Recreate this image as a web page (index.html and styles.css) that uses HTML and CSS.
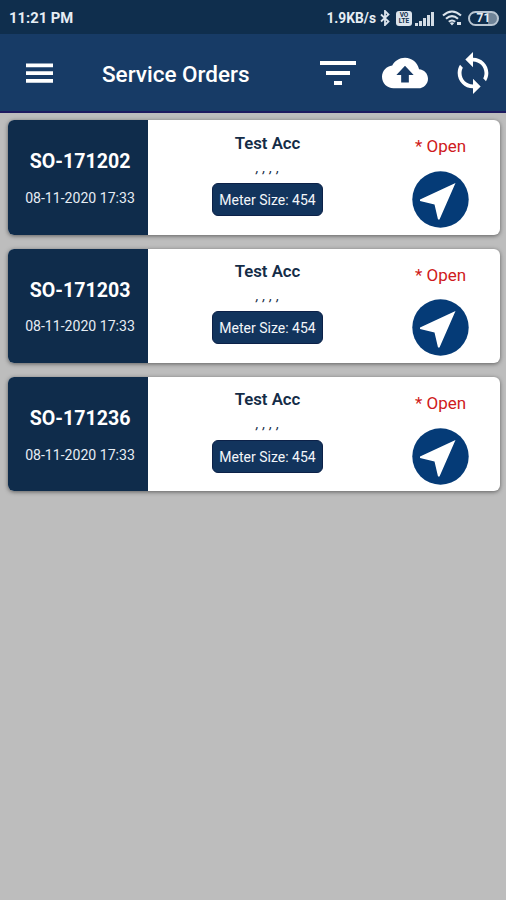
FILE: index.html
```html
<!DOCTYPE html>
<html lang="en">
<head>
<meta charset="utf-8">
<title>Service Orders</title>
<link rel="stylesheet" href="styles.css">
</head>
<body>
<div class="status">
  <span class="time">11:21 PM</span>
  <span class="speed">1.9KB/s</span>
  <svg class="bt" width="10" height="16" viewBox="0 0 10 16"><path d="M1 4.5 8.5 11.5 5 15V1l3.500 3.500L1 11.500" fill="none" stroke="#dce4ec" stroke-width="1.800"/></svg>
  <span class="volte"><span>VO</span><span>LTE</span></span>
  <svg class="signal" width="20" height="15" viewBox="0 0 20 15" fill="#d3dce5"><path d="M0 12h3v3H0zM4 10h3v5H4zM8 7h3v8H8zM12 4h3v11h-3zM16 1h3v14h-3z"/></svg>
  <svg class="wifi" width="20" height="16" viewBox="0 0 20 16"><g fill="none" stroke="#dce4ec" stroke-width="2.100"><path d="M1 5.500q9-8 18 0M4 8.800q6-5.400 12 0M6.800 11.800q3.200-2.600 6.400 0"/></g><path d="m7.800 13 2.200 2.500 2.200-2.500q-2.200-1.500-4.400 0zM15 12h4v3h-4z" fill="#dce4ec"/></svg>
  <span class="battery">71</span>
</div>
<header class="bar">
  <svg class="menu" width="27" height="22" viewBox="0 0 27 22" fill="#fff"><path d="M0 1.500h27v3.800H0zM0 9.200h27v3.800H0zM0 16.900h27v3.800H0z"/></svg>
  <h1>Service Orders</h1>
  <svg class="filter" width="48" height="48" viewBox="0 0 24 24" fill="#fff"><path d="M10 18h4v-2h-4v2zM3 6v2h18V6H3zm3 7h12v-2H6v2z"/></svg>
  <svg class="cloud" width="46" height="46" viewBox="0 0 24 24" fill="#fff"><path d="M19.350 10.040C18.670 6.590 15.640 4 12 4 9.110 4 6.600 5.640 5.350 8.040 2.340 8.360 0 10.910 0 14c0 3.310 2.690 6 6 6h13c2.760 0 5-2.240 5-5 0-2.640-2.050-4.780-4.650-4.960zM14 13v4h-4v-4H7.500l4.500-4.800 4.500 4.800z"/></svg>
  <svg class="sync" width="46" height="46" viewBox="0 0 24 24" fill="#fff"><path d="M12 4V1L8 5l4 4V6c3.310 0 6 2.690 6 6 0 1.010-.25 1.970-.7 2.800l1.460 1.460C19.540 15.030 20 13.570 20 12c0-4.420-3.580-8-8-8zm0 14c-3.310 0-6-2.690-6-6 0-1.010.25-1.970.7-2.800L5.240 7.740C4.460 8.970 4 10.430 4 12c0 4.420 3.580 8 8 8v3l4-4-4-4v3z"/></svg>
</header>
<main class="orders">
  <article class="card">
    <div class="order"><div class="number">SO-171202</div><div class="date">08-11-2020 17:33</div></div>
    <div class="account"><div class="name">Test Acc</div><div class="address">, , , ,</div><div class="meter">Meter Size: 454</div></div>
    <div class="state"><div class="open">* Open</div><svg width="57" height="57" viewBox="0 0 57 57"><circle cx="28.500" cy="28.500" r="28.200" fill="#053b77"/><path d="M43.500 12 8 28.500v1.500l14.500 3.500 3.500 15h1.500z" fill="#fff"/></svg></div>
  </article>
  <article class="card">
    <div class="order"><div class="number">SO-171203</div><div class="date">08-11-2020 17:33</div></div>
    <div class="account"><div class="name">Test Acc</div><div class="address">, , , ,</div><div class="meter">Meter Size: 454</div></div>
    <div class="state"><div class="open">* Open</div><svg width="57" height="57" viewBox="0 0 57 57"><circle cx="28.500" cy="28.500" r="28.200" fill="#053b77"/><path d="M43.500 12 8 28.500v1.500l14.500 3.500 3.500 15h1.500z" fill="#fff"/></svg></div>
  </article>
  <article class="card">
    <div class="order"><div class="number">SO-171236</div><div class="date">08-11-2020 17:33</div></div>
    <div class="account"><div class="name">Test Acc</div><div class="address">, , , ,</div><div class="meter">Meter Size: 454</div></div>
    <div class="state"><div class="open">* Open</div><svg width="57" height="57" viewBox="0 0 57 57"><circle cx="28.500" cy="28.500" r="28.200" fill="#053b77"/><path d="M43.500 12 8 28.500v1.500l14.500 3.500 3.500 15h1.500z" fill="#fff"/></svg></div>
  </article>
</main>
</body>
</html>
```
FILE: styles.css
```css
* { box-sizing: border-box; }
body {
  margin: 0;
  height: 900px;
  overflow: hidden;
  background: #bdbdbd;
  font-family: Roboto, sans-serif;
  white-space: nowrap;
}
svg { display: block; flex: none; }
.status {
  height: 34px;
  display: flex;
  align-items: center;
  padding: 2px 7px 0 9px;
  background: #0f2e4d;
  color: #e6edf4;
}
.time { font-size: 14.800px; font-weight: 700; }
.speed { margin-left: auto; font-size: 13.800px; font-weight: 700; }
.bt { margin-left: 4px; }
.volte {
  width: 16px;
  height: 15px;
  margin-left: 6px;
  padding-top: 1px;
  border-radius: 3px;
  background: #dce4ec;
  color: #0f2e4d;
  display: flex;
  flex-direction: column;
  align-items: center;
  font-size: 6.500px;
  line-height: 6.500px;
  font-weight: 700;
}
.signal { margin-left: 3px; }
.wifi { margin-left: 7px; }
.battery {
  width: 31px;
  height: 15px;
  margin-left: 6px;
  border: 2px solid #b9c6d2;
  border-radius: 8px;
  background: linear-gradient(90deg, #0f2e4d 68%, #6f8498 68%);
  text-align: center;
  font-size: 12px;
  line-height: 11px;
  font-weight: 700;
}
.bar {
  height: 79px;
  display: flex;
  align-items: center;
  background: #173b66;
  border-bottom: 2px solid #1d1a60;
  padding: 0 10px 0 26px;
}
.bar h1 {
  margin: 3px auto 0 49px;
  color: #fff;
  font-size: 22.500px;
  line-height: 28px;
  font-weight: 500;
}
.filter { margin-right: 20px; }
.cloud { margin-right: 22px; margin-top: 1px; }
.orders {
  padding: 7.400px 6px 0 8px;
  display: flex;
  flex-direction: column;
  gap: 14.200px;
}
.card {
  height: 114.200px;
  display: flex;
  overflow: hidden;
  border-radius: 6px;
  background: #fff;
  box-shadow: 0 1px 4px rgba(0, 0, 0, .5);
}
.order {
  width: 140px;
  background: #0f2c4b;
  color: #fff;
  text-align: center;
  padding: 29px 0 0 4px;
}
.number { font-size: 19.600px; line-height: 26px; font-weight: 700; }
.date { margin-top: 12.500px; font-size: 14.100px; line-height: 20px; color: #e6edf4; }
.account {
  width: 239px;
  padding-top: 11.200px;
  display: flex;
  flex-direction: column;
  align-items: center;
  color: #142c47;
}
.name { font-size: 16.800px; line-height: 22px; font-weight: 600; }
.address { height: 29.500px; font-size: 12px; line-height: 29px; font-style: italic; font-weight: 500; word-spacing: 1.300px; }
.meter {
  width: 111px;
  height: 33px;
  border: 1px solid #0c2148;
  border-radius: 6px;
  background: #12345d;
  color: #f4f7fa;
  text-align: center;
  font-size: 14px;
  line-height: 33px;
}
.state {
  flex: 1;
  padding: 15px 6px 0 0;
  display: flex;
  flex-direction: column;
  align-items: center;
}
.open { height: 35.500px; color: #cf1a20; font-size: 17px; line-height: 22px; }
```
